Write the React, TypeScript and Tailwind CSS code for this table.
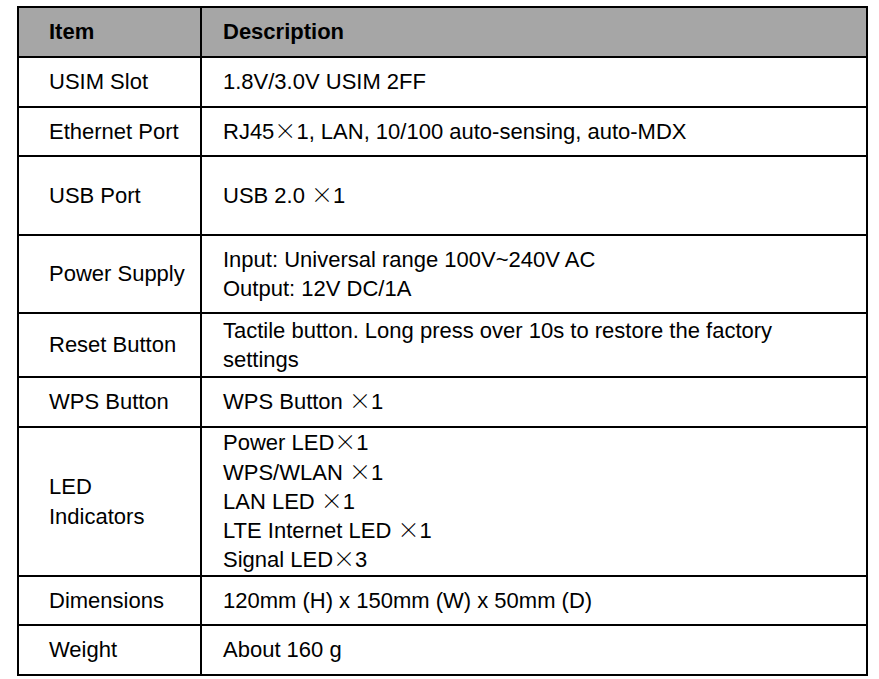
import React from 'react';

// full-width multiplication sign, as in the source document
const X = ({ n }: { n: number }) => (
  <>
    <span className="font-['Noto_Sans_CJK_SC',sans-serif] font-light leading-[0]">×</span>
    {n}
  </>
);

interface Row {
  item: React.ReactNode;
  desc: React.ReactNode;
  h: string;
}

const rows: Row[] = [
  { item: 'USIM Slot', desc: '1.8V/3.0V USIM 2FF', h: 'h-[50px]' },
  {
    item: 'Ethernet Port',
    desc: (
      <>
        RJ45<X n={1} />, LAN, 10/100 auto-sensing, auto-MDX
      </>
    ),
    h: 'h-[49px]',
  },
  {
    item: 'USB Port',
    desc: (
      <>
        USB 2.0 <X n={1} />
      </>
    ),
    h: 'h-[79px]',
  },
  {
    item: 'Power Supply',
    desc: (
      <>
        Input: Universal range 100V~240V AC
        <br />
        Output: 12V DC/1A
      </>
    ),
    h: 'h-[78px]',
  },
  {
    item: 'Reset Button',
    desc: (
      <>
        Tactile button. Long press over 10s to restore the factory
        <br />
        settings
      </>
    ),
    h: 'h-[64px]',
  },
  {
    item: 'WPS Button',
    desc: (
      <>
        WPS Button <X n={1} />
      </>
    ),
    h: 'h-[50px]',
  },
  {
    item: (
      <>
        LED
        <br />
        Indicators
      </>
    ),
    desc: (
      <>
        Power LED<X n={1} />
        <br />
        WPS/WLAN <X n={1} />
        <br />
        LAN LED <X n={1} />
        <br />
        LTE Internet LED <X n={1} />
        <br />
        Signal LED<X n={3} />
      </>
    ),
    h: 'h-[149px]',
  },
  { item: 'Dimensions', desc: '120mm (H) x 150mm (W) x 50mm (D)', h: 'h-[49px]' },
  { item: 'Weight', desc: 'About 160 g', h: 'h-[50px]' },
];

export default function App() {
  return (
    <div className="w-[879px] h-[679px] bg-white pt-[6px] pl-[17px] font-['Liberation_Sans',Arial,sans-serif] text-[22px] leading-[29.3px] text-black">
      <div className="w-[851px] border-2 border-black">
        {/* header */}
        <div className="flex h-[48px] bg-[#a6a6a6] font-bold">
          <div className="w-[181px] flex items-center pl-[30px]">Item</div>
          <div className="flex-1 flex items-center pl-[21px] border-l-2 border-black">Description</div>
        </div>

        {rows.map((r, i) => (
          <div key={i} className={`flex border-t-2 border-black ${r.h}`}>
            <div className="w-[181px] flex items-center pl-[30px]">{r.item}</div>
            <div className="flex-1 flex items-center pl-[21px] border-l-2 border-black">
              <div>{r.desc}</div>
            </div>
          </div>
        ))}
      </div>
    </div>
  );
}
